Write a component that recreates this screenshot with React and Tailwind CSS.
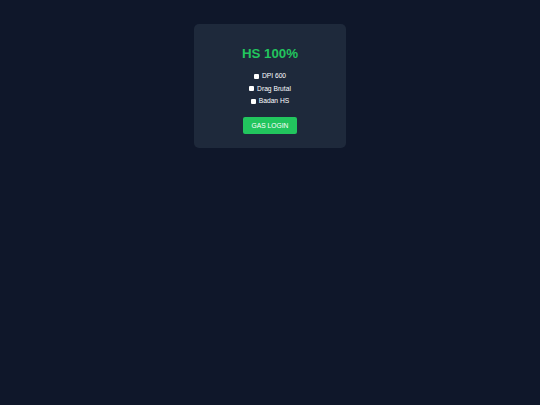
export default function App() {
  const items = ["DPI 600", "Drag Brutal", "Badan HS"];
  return (
    <div className="w-[540px] h-[405px] bg-[#0f172a] flex justify-center" style={{ fontFamily: '"Liberation Sans", Arial, sans-serif' }}>
      <div className="mt-[24px] w-[152px] h-[124px] bg-[#1e293b] rounded-[5px] flex flex-col items-center pt-[22px]">
        <h1 className="text-[13.3px] leading-[16px] font-bold text-[#22c55e]">HS 100%</h1>
        <div className="mt-[10px] flex flex-col items-center gap-[4.5px]">
          {items.map((t) => (
            <label key={t} className="flex items-center gap-[3px] text-[6.7px] leading-[8px] text-white">
              <span className="w-[5px] h-[5px] bg-white rounded-[1px] inline-block" />
              {t}
            </label>
          ))}
        </div>
        <button className="mt-[12px] w-[54px] h-[17px] bg-[#22c55e] rounded-[2px] text-white text-[6.7px] leading-[17px]">GAS LOGIN</button>
      </div>
    </div>
  );
}
